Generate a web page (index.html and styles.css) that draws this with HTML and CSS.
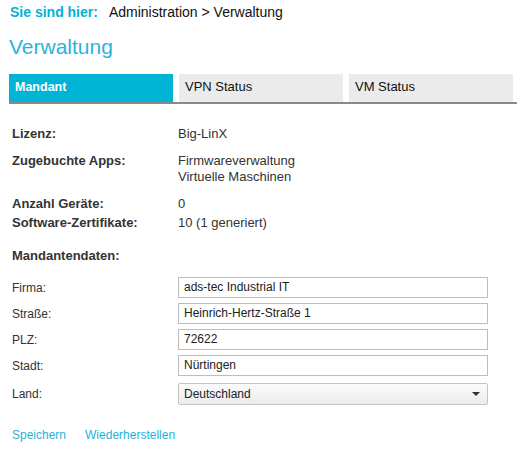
FILE: index.html
```html
<!DOCTYPE html>
<html>
<head>
<meta charset="utf-8">
<link rel="stylesheet" href="styles.css">
</head>
<body>
<div class="page">
  <div class="crumb"><span class="crumb-label">Sie sind hier:</span><span class="crumb-path">Administration &gt; Verwaltung</span></div>
  <h1 class="title">Verwaltung</h1>
  <div class="tabs">
    <div class="tab active">Mandant</div>
    <div class="tab">VPN Status</div>
    <div class="tab">VM Status</div>
  </div>
  <div class="info">
    <div class="row r-lizenz"><div class="key">Lizenz:</div><div class="val">Big-LinX</div></div>
    <div class="row r-apps"><div class="key">Zugebuchte Apps:</div><div class="val">Firmwareverwaltung<br>Virtuelle Maschinen</div></div>
    <div class="row r-geraete"><div class="key">Anzahl Geräte:</div><div class="val">0</div></div>
    <div class="row r-zert"><div class="key">Software-Zertifikate:</div><div class="val">10 (1 generiert)</div></div>
    <div class="section">Mandantendaten:</div>
  </div>
  <div class="form">
    <div class="frow"><div class="flabel">Firma:</div><div class="input">ads-tec Industrial IT</div></div>
    <div class="frow"><div class="flabel">Straße:</div><div class="input">Heinrich-Hertz-Straße 1</div></div>
    <div class="frow"><div class="flabel">PLZ:</div><div class="input">72622</div></div>
    <div class="frow"><div class="flabel">Stadt:</div><div class="input">Nürtingen</div></div>
    <div class="frow frow-select"><div class="flabel">Land:</div><div class="select"><span>Deutschland</span><svg class="caret" width="8" height="4" viewBox="0 0 8 4"><path d="M0 0H8L4 4Z" fill="#333"/></svg></div></div>
  </div>
  <div class="actions"><span class="link">Speichern</span><span class="link">Wiederherstellen</span></div>
</div>
</body>
</html>
```
FILE: styles.css
```css
html, body { margin: 0; padding: 0; background: #fff; }
body { font-family: "Liberation Sans", Arial, sans-serif; color: #222; }
.page { padding: 3px 0 0 9px; }
.crumb { font-size: 14px; line-height: 18px; display: flex; gap: 11px; padding-left: 1px; }
.crumb-label { color: #00b2d6; font-weight: bold; }
.crumb-path { color: #111; }
.title { margin: 14px 0 0 0; font-size: 21px; font-weight: normal; color: #2ab4dc; line-height: 24px; }
.tabs { margin-top: 15px; display: flex; gap: 6px; border-bottom: 2px solid #8a8a8a; height: 28px; padding-right: 4px; }
.tab { flex: 1; background: #ebebeb; font-size: 13px; line-height: 26px; padding: 0 0 2px 6px; color: #111; }
.tab.active { background: #00b4d6; color: #fff; font-weight: bold; font-size: 12.5px; }
.info { padding-left: 3px; padding-top: 22px; font-size: 13px; }
.row { display: flex; line-height: 16px; }
.key { width: 166px; font-weight: bold; color: #333; }
.val { color: #333; }
.r-apps { margin-top: 11px; }
.r-geraete { margin-top: 11px; }
.r-zert { margin-top: 3px; }
.section { margin-top: 17px; font-weight: bold; color: #333; line-height: 16px; }
.form { margin-top: 13px; padding-left: 3px; display: flex; flex-direction: column; gap: 5px; font-size: 12px; }
.frow { display: flex; align-items: center; height: 21px; }
.frow-select { height: 22px; margin-top: 2px; }
.flabel { width: 166px; color: #333; line-height: 14px; }
.input { box-sizing: border-box; width: 310px; height: 21px; border: 1px solid #bdbdbd; padding-left: 5px; line-height: 19px; color: #222; }
.select { box-sizing: border-box; width: 310px; height: 22px; border: 1px solid #c4c4c4; border-radius: 2px; padding: 0 7px 0 5px; line-height: 20px; background: linear-gradient(#fbfbfb, #ebebeb); display: flex; justify-content: space-between; align-items: center; color: #222; }
.actions { margin-top: 23px; padding-left: 3px; display: flex; gap: 19px; font-size: 12px; line-height: 14px; }
.link { color: #1fb2dc; }
```
